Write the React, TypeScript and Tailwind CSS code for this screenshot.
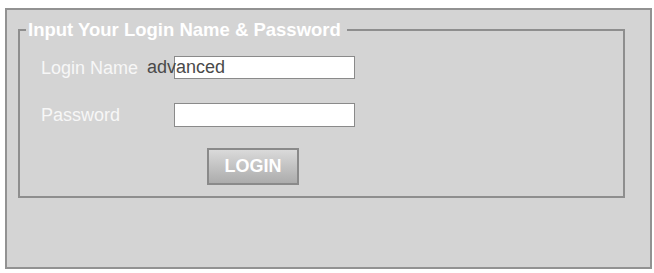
import React from 'react';

export default function App() {
  return (
    <div className="w-[654px] h-[273px] bg-white pt-[8px] pl-[5px] font-['Liberation_Sans',Arial,sans-serif]">
      <div className="w-[647px] h-[261px] border-2 border-[#929292] bg-[#d4d4d4] pt-[10px] pl-[11px]">
        {/* Login fieldset */}
        <fieldset className="w-[607px] h-[178px] border-2 border-[#8e8e8e]">
          <legend className="ml-[6px] pl-[2px] pr-[6px] text-[18.5px] leading-[20px] font-bold text-white">
            Input Your Login Name &amp; Password
          </legend>

          <div className="pl-[21px]">
            <div className="mt-[16px] flex items-center h-[23px]">
              <span className="w-[133px] text-[18px] leading-[20px] text-[#f7f7f7]">Login Name</span>
              <div className="relative">
                <input
                  type="text"
                  className="w-[181px] h-[23px] bg-white border border-[#8a8a8a] outline-none"
                  readOnly
                />
                {/* value text overhangs the box */}
                <span className="absolute left-[-27px] top-[1px] text-[18px] leading-[20px] text-[#4a4a4a]">
                  advanced
                </span>
              </div>
            </div>

            <div className="mt-[24px] flex items-center h-[24px]">
              <span className="w-[133px] text-[18px] leading-[20px] text-[#f7f7f7]">Password</span>
              <input
                type="password"
                className="w-[181px] h-[24px] bg-white border border-[#8a8a8a] outline-none"
                readOnly
              />
            </div>

            <div className="mt-[21px] pl-[166px]">
              <button className="w-[92px] h-[37px] border-2 border-[#8a8a8a] bg-gradient-to-b from-[#dadada] to-[#acacac] text-[18px] font-bold text-white">
                LOGIN
              </button>
            </div>
          </div>
        </fieldset>
      </div>
    </div>
  );
}
